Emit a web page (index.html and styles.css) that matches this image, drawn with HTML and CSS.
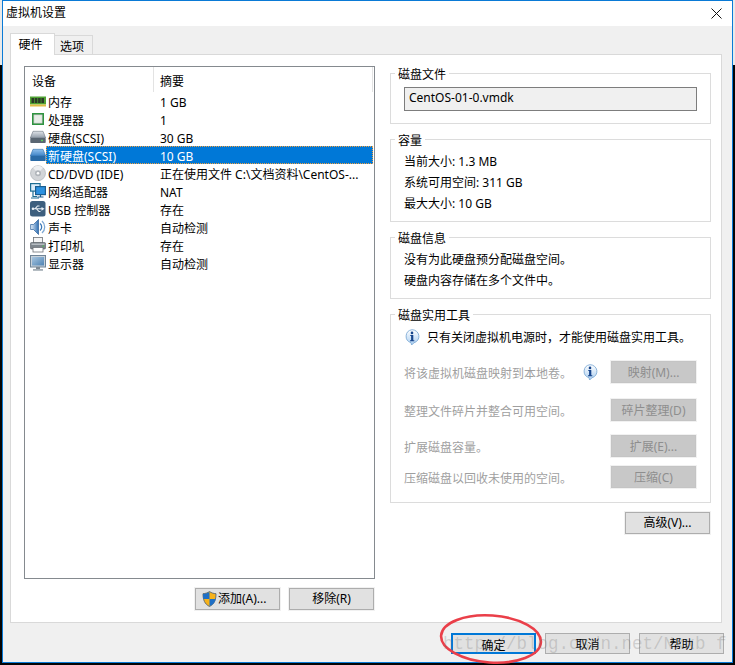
FILE: index.html
```html
<!DOCTYPE html>
<html lang="zh">
<head>
<meta charset="utf-8">
<title>虚拟机设置</title>
<link rel="stylesheet" href="styles.css">
</head>
<body>
<svg class="defs" width="0" height="0" aria-hidden="true">
  <defs>
    <linearGradient id="disk" x1="0" y1="0" x2="0" y2="1"><stop offset="0" stop-color="#dfe3e8"/><stop offset="1" stop-color="#8f9aa6"/></linearGradient>
    <linearGradient id="diskblue" x1="0" y1="0" x2="0" y2="1"><stop offset="0" stop-color="#8fc0ec"/><stop offset="1" stop-color="#3d83c6"/></linearGradient>
    <linearGradient id="bubble" x1="0" y1="0" x2="0" y2="1"><stop offset="0" stop-color="#ffffff"/><stop offset="1" stop-color="#a9cdf0"/></linearGradient>
    <linearGradient id="screen" x1="0" y1="0" x2="1" y2="1"><stop offset="0" stop-color="#a8c6e0"/><stop offset="1" stop-color="#4f83b3"/></linearGradient>
    <linearGradient id="cone" x1="0" y1="0" x2="1" y2="0"><stop offset="0" stop-color="#e6f0fa"/><stop offset="1" stop-color="#2f6fb3"/></linearGradient>
    <symbol id="info" viewBox="0 0 16 16">
      <path d="M8 .7a7 6.7 0 0 1 2 13.100L7.600 16l-.6-2.300A7 6.700 0 0 1 8 .7z" fill="url(#bubble)" stroke="#7fabd6" stroke-width=".9"/>
      <circle cx="8" cy="3.900" r="1.300" fill="#17458c"/>
      <path d="M6.300 6h3v5.200h1v1.100H6v-1.100h1.100V7.100H6.300z" fill="#17458c"/>
    </symbol>
  </defs>
</svg>
<main class="window">
  <header class="titlebar">
    <span class="title">虚拟机设置</span>
    <svg class="close" width="11" height="11" viewBox="0 0 11 11"><path d="M.5.500l10 10M10.500.500l-10 10" stroke="#111" stroke-width="1" fill="none"/></svg>
  </header>
  <div class="body">
    <nav class="tabs">
      <span class="tab tab-active">硬件</span>
      <span class="tab">选项</span>
    </nav>
    <section class="panel">
      <div class="left">
        <div class="list">
          <div class="list-head">
            <span class="head-device">设备</span>
            <span class="head-summary">摘要</span>
          </div>
          <div class="row">
            <svg class="ico" viewBox="0 0 16 16"><rect x="0" y="3.500" width="16" height="8" fill="#4fa233"/><rect x="0" y="11.500" width="16" height="2" fill="#e0bd45"/><rect x="1.500" y="5" width="2.600" height="5" fill="#2b3a26"/><rect x="4.800" y="5" width="2.600" height="5" fill="#2b3a26"/><rect x="8.100" y="5" width="2.600" height="5" fill="#2b3a26"/><rect x="11.400" y="5" width="2.600" height="5" fill="#2b3a26"/></svg>
            <div class="cells"><span class="name">内存</span><span>1 GB</span></div>
          </div>
          <div class="row">
            <svg class="ico" viewBox="0 0 16 16"><rect x="2" y="2" width="12" height="12" fill="#2e9440"/><rect x="3.800" y="3.800" width="8.400" height="8.400" fill="#e7ece7" stroke="#9db09f" stroke-width=".6"/></svg>
            <div class="cells"><span class="name">处理器</span><span>1</span></div>
          </div>
          <div class="row">
            <svg class="ico" viewBox="0 0 16 16"><path d="M3 2.300h10L15.700 9H.3z" fill="url(#disk)" stroke="#6b7681" stroke-width=".6"/><rect x=".3" y="9" width="15.400" height="5" rx=".8" fill="#5a6672"/><rect x="11" y="10.800" width="2" height="1.400" fill="#57d05a"/></svg>
            <div class="cells"><span class="name">硬盘(SCSI)</span><span>30 GB</span></div>
          </div>
          <div class="row">
            <svg class="ico" viewBox="0 0 16 16"><path d="M3 2.300h10L15.700 9H.3z" fill="url(#diskblue)" stroke="#2f6ea8" stroke-width=".6"/><rect x=".3" y="9" width="15.400" height="5" rx=".8" fill="#2a6ba6"/></svg>
            <div class="cells cells-selected"><span class="name">新硬盘(SCSI)</span><span>10 GB</span></div>
          </div>
          <div class="row">
            <svg class="ico" viewBox="0 0 16 16"><circle cx="8" cy="8.200" r="7.500" fill="#d2d5d8" stroke="#a6abb0" stroke-width=".6"/><path d="M8 8.200L3 2.800A7.300 7.300 0 0 1 13 2.800z" fill="#eef0f2"/><circle cx="8" cy="8.200" r="3" fill="#b0b5ba"/><circle cx="8" cy="8.200" r="1.300" fill="#fff"/></svg>
            <div class="cells"><span class="name">CD/DVD (IDE)</span><span>正在使用文件 C:\文档资料\CentOS-...</span></div>
          </div>
          <div class="row">
            <svg class="ico" viewBox="0 0 16 16"><rect x=".6" y=".6" width="9.500" height="7.500" fill="#dcedfa" stroke="#1f6e93" stroke-width="1.200"/><path d="M3 8v5.500h4M1 15h8" stroke="#1f6e93" stroke-width="1.200" fill="none"/><rect x="5.600" y="3.600" width="9.800" height="8" fill="#2d92e0" stroke="#1a5e91" stroke-width="1.200"/><path d="M10.500 11.600v2M7.500 14h6" stroke="#1a5e91" stroke-width="1.200" fill="none"/></svg>
            <div class="cells"><span class="name">网络适配器</span><span>NAT</span></div>
          </div>
          <div class="row">
            <svg class="ico" viewBox="0 0 16 16"><rect x="0" y="0" width="15.500" height="15.500" rx="2.500" fill="#3d5f7e"/><path d="M3 7.800h9M5 7.800l2.500-2.800h2M6.500 7.800l2.500 2.700h1.500" stroke="#eaf0f5" stroke-width="1.100" fill="none"/><path d="M11.500 5.900l3 1.900-3 1.900z" fill="#eaf0f5"/><circle cx="3" cy="7.800" r="1.300" fill="#eaf0f5"/></svg>
            <div class="cells"><span class="name">USB 控制器</span><span>存在</span></div>
          </div>
          <div class="row">
            <svg class="ico" viewBox="0 0 16 16"><path d="M.6 5.500h2.900L8.500.5v15l-5-5H.6z" fill="url(#cone)" stroke="#2a5f99" stroke-width=".7"/><path d="M10 4.500a4.500 4.500 0 0 1 0 7" stroke="#3a78b8" stroke-width="1.300" fill="none"/><path d="M12 2a8 8 0 0 1 0 12" stroke="#7fa9d4" stroke-width="1.300" fill="none"/></svg>
            <div class="cells"><span class="name">声卡</span><span>自动检测</span></div>
          </div>
          <div class="row">
            <svg class="ico" viewBox="0 0 16 16"><rect x="3.500" y=".5" width="9" height="5.500" fill="#f5f5f5" stroke="#6f7378" stroke-width=".8"/><rect x=".5" y="5.500" width="15" height="6.500" rx="1" fill="#7d858c" stroke="#555b61" stroke-width=".6"/><rect x="1.500" y="6.500" width="13" height="1.500" fill="#b5bbc0"/><rect x="3" y="10.500" width="10" height="4.500" fill="#fff" stroke="#6f7378" stroke-width=".8"/><rect x="12.500" y="8.500" width="1.500" height="1.200" fill="#4bc04b"/></svg>
            <div class="cells"><span class="name">打印机</span><span>存在</span></div>
          </div>
          <div class="row">
            <svg class="ico" viewBox="0 0 16 16"><rect x=".5" y=".5" width="15" height="11.500" fill="#c9d2da" stroke="#6f8395"/><rect x="2" y="2" width="12" height="8.500" fill="url(#screen)"/><rect x="6" y="12" width="4" height="2" fill="#7f8a94"/><rect x="3" y="14" width="10" height="1.800" fill="#a4adb5"/></svg>
            <div class="cells"><span class="name">显示器</span><span>自动检测</span></div>
          </div>
        </div>
        <div class="list-actions">
          <button class="btn btn-shield" type="button">
            <svg class="shield" width="15" height="16" viewBox="0 0 15 16"><path d="M7.500.5c2 1.500 4 2 6.500 2.200 0 6-1.500 10.300-6.500 12.800C2.500 13 1 8.700 1 2.700 3.500 2.500 5.500 2 7.500.5z" fill="#f7b21a" stroke="#5b6670" stroke-width=".9"/><path d="M7.500 1v7H1.300C1.100 6.500 1 4.700 1 2.900 3.500 2.600 5.500 2.100 7.500 1zM7.500 8h6.200c-.6 3.300-2.400 5.700-6.200 7.200z" fill="#1f6fc5"/></svg>
            <span>添加(A)...</span>
          </button>
          <button class="btn" type="button">移除(R)</button>
        </div>
      </div>
      <div class="right">
        <div class="group group-file">
          <span class="legend">磁盘文件</span>
          <div class="filebox">CentOS-01-0.vmdk</div>
        </div>
        <div class="group group-size">
          <span class="legend">容量</span>
          <p class="line">当前大小: 1.3 MB</p>
          <p class="line">系统可用空间: 311 GB</p>
          <p class="line">最大大小: 10 GB</p>
        </div>
        <div class="group group-info">
          <span class="legend">磁盘信息</span>
          <p class="line">没有为此硬盘预分配磁盘空间。</p>
          <p class="line">硬盘内容存储在多个文件中。</p>
        </div>
        <div class="group group-tools">
          <span class="legend">磁盘实用工具</span>
          <div class="note">
            <svg class="info" viewBox="0 0 16 16"><use href="#info"/></svg>
            <span>只有关闭虚拟机电源时，才能使用磁盘实用工具。</span>
          </div>
          <div class="tool tool-map">
            <span class="tool-text">将该虚拟机磁盘映射到本地卷。</span>
            <svg class="info info-tool" viewBox="0 0 16 16"><use href="#info"/></svg>
            <button class="btn btn-off" type="button" disabled>映射(M)...</button>
          </div>
          <div class="tool tool-defrag">
            <span class="tool-text">整理文件碎片并整合可用空间。</span>
            <button class="btn btn-off" type="button" disabled>碎片整理(D)</button>
          </div>
          <div class="tool tool-expand">
            <span class="tool-text">扩展磁盘容量。</span>
            <button class="btn btn-off" type="button" disabled>扩展(E)...</button>
          </div>
          <div class="tool tool-compact">
            <span class="tool-text">压缩磁盘以回收未使用的空间。</span>
            <button class="btn btn-off" type="button" disabled>压缩(C)</button>
          </div>
        </div>
        <div class="advanced">
          <button class="btn" type="button">高级(V)...</button>
        </div>
      </div>
    </section>
    <footer class="footer">
      <button class="btn btn-primary" type="button">确定</button>
      <button class="btn" type="button">取消</button>
      <button class="btn" type="button">帮助</button>
    </footer>
  </div>
  <svg class="ring" width="110" height="60" viewBox="0 0 110 60"><ellipse cx="55" cy="30" rx="50" ry="23.500" transform="rotate(4 55 30)" fill="none" stroke="#ea3f49" stroke-width="2.600"/></svg>
  <span class="watermark">http://blog.csdn.net/Nxxb f</span>
</main>
</body>
</html>
```

FILE: styles.css
```css
* { box-sizing: border-box; }

html, body { margin: 0; padding: 0; }

body {
  width: 735px;
  height: 665px;
  overflow: hidden;
  background: linear-gradient(#e9e9e9 0 65px, #050505 65px);
  padding: 0 2px 2px;
  font-family: "Noto Sans", "Noto Sans CJK SC", sans-serif;
  font-size: 12px;
  color: #000;
}

.defs { position: absolute; }

.window {
  position: relative;
  width: 731px;
  height: 663px;
  border: 1px solid #0a7ad6;
  display: flex;
  flex-direction: column;
  background: #f0f0f0;
}

.titlebar {
  height: 25px;
  flex: none;
  background: #fff;
  display: flex;
  align-items: center;
  justify-content: space-between;
  padding: 0 10px 1px 3px;
}

.title { line-height: 22px; }

.body {
  flex: 1;
  display: flex;
  flex-direction: column;
  padding: 7px 10px 0 7px;
}

.tabs {
  display: flex;
  align-items: flex-end;
  height: 21px;
  flex: none;
}

.tab {
  width: 38px;
  height: 19px;
  background: #f0f0f0;
  border: 1px solid #d9d9d9;
  border-bottom: 0;
  border-left: 0;
  padding: 1px 3px 0 0;
  text-align: center;
  line-height: 20px;
}

.tab-active {
  width: 45px;
  height: 22px;
  margin-bottom: -1px;
  background: #fff;
  border-left: 1px solid #d9d9d9;
  position: relative;
  z-index: 1;
  padding: 1px 4px 0 0;
  line-height: 20px;
}

.panel {
  height: 569px;
  flex: none;
  background: #fff;
  border: 1px solid #d9d9d9;
  padding: 11px 10px 0 13px;
  display: grid;
  grid-template-columns: 351px 322px;
  column-gap: 15px;
  align-items: start;
}

.list {
  height: 513px;
  border: 1px solid #858a8f;
  background: #fff;
}

.list-head {
  height: 25px;
  display: flex;
  line-height: 29px;
}

.head-device {
  width: 129px;
  padding-left: 7px;
  border-right: 1px solid #e3e3e3;
}

.head-summary {
  flex: 1;
  padding-left: 6px;
  margin-right: 1px;
  border-right: 1px solid #e3e3e3;
}

.row {
  display: flex;
  height: 18px;
  align-items: center;
  padding-left: 5px;
}

.ico { width: 16px; height: 16px; flex: none; }

.cells {
  width: 327px;
  height: 18px;
  display: flex;
  padding: 2px 0 0 2px;
  line-height: 17px;
  white-space: nowrap;
}

.cells-selected {
  background: #0078d7;
  color: #fff;
  outline: 1px dotted #f0a040;
  outline-offset: -1px;
}

.name { width: 112px; flex: none; }

.list-actions {
  display: flex;
  justify-content: flex-end;
  gap: 9px;
  margin: 9px 1px 0 0;
}

.btn {
  width: 85px;
  height: 22px;
  padding: 0;
  background: #e1e1e1;
  border: 1px solid #adadad;
  outline: 1px solid #f1f1f1;
  font: inherit;
  color: #000;
  line-height: 18px;
  text-align: center;
}

.btn-shield {
  display: flex;
  align-items: center;
  padding-left: 6px;
  gap: 1px;
}

.btn-off {
  background: #c8c8c8;
  border-color: #c4c4c4;
  color: #8e8e8e;
  flex: none;
  padding-top: 2px;
}

.btn-primary { border: 2px solid #0078d7; }

.shield { flex: none; }

.right { padding-top: 7px; }

.group {
  border: 1px solid #dcdcdc;
  padding: 0 14px 0 13px;
  width: 321px;
}

.legend {
  display: block;
  width: fit-content;
  margin: -9px 0 0 -9px;
  padding: 0 3px;
  background: #fff;
  line-height: 19px;
}

.group-file { height: 51px; }
.group-size { height: 83px; margin-top: 15px; }
.group-info { height: 62px; margin-top: 15px; }
.group-tools { height: 189px; margin-top: 15px; }

.filebox {
  width: 293px;
  height: 24px;
  margin-top: 3px;
  background: #f0f0f0;
  border: 1px solid #7d7d7d;
  padding-left: 4px;
  line-height: 19px;
}

.line {
  margin: 3px 0 0;
  height: 17px;
  line-height: 17px;
}

.line + .line { margin-top: 4px; }

.note {
  display: flex;
  align-items: center;
  height: 18px;
  margin-top: 3px;
  gap: 7px;
}

.info { width: 16px; height: 16px; flex: none; }

.tool {
  display: flex;
  align-items: center;
  height: 22px;
  color: #9f9f9f;
}

.tool-text { flex: 1; padding-top: 2px; }
.tool-map { margin-top: 15px; }
.tool-defrag { margin-top: 16px; }
.tool-expand { margin-top: 14px; }
.tool-compact { margin-top: 9px; }

.info-tool { margin-right: 13px; }

.advanced {
  display: flex;
  justify-content: flex-end;
  margin: 9px 2px 0 0;
}

.footer {
  display: flex;
  justify-content: flex-end;
  gap: 9px;
  padding: 10px 0 0;
  margin-right: -2px;
}

.footer .btn { height: 21px; padding-top: 2px; }

.ring {
  position: absolute;
  left: 433px;
  top: 608px;
}

.watermark {
  position: absolute;
  left: 440px;
  top: 630px;
  font-family: "Liberation Mono", monospace;
  font-size: 17.5px;
  color: rgba(110, 110, 110, 0.26);
  line-height: 26px;
  white-space: nowrap;
  pointer-events: none;
}
```
